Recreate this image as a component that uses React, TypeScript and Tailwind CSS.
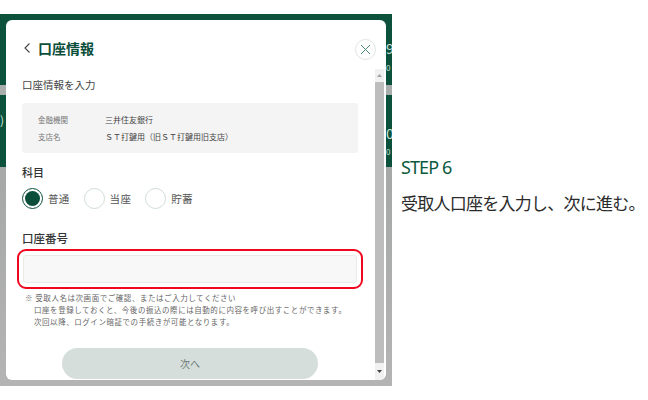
import React from "react";

const jp = "font-['Noto_Sans_CJK_JP','Noto_Sans',sans-serif]";

function Radio({ label, on }: { label: string; on?: boolean }) {
  return (
    <div className="flex items-center gap-[5px]">
      <div className={`w-[21px] h-[21px] rounded-full border flex items-center justify-center ${on ? "border-[#0b4f3a] border-[1.5px]" : "border-[#cfdcd7]"}`}>
        {on && <div className="w-[15px] h-[15px] rounded-full bg-[#0b4f3a]" />}
      </div>
      <span className="text-[10.5px] tracking-[0.3px] text-[#555]">{label}</span>
    </div>
  );
}

export default function App() {
  return (
    <div className={`${jp} w-[648px] h-[400px] bg-white flex overflow-hidden`}>
      <div className="w-[392px] shrink-0 pt-[14px]">
        <div className="relative w-[392px] h-[372px] flex flex-col bg-[#b0b0b0]">
          <div className="h-[71px] bg-[#0b513b]" />
          <div className="h-[10px] bg-[#a9aeac]" />
          <div className="h-[72px] bg-[#0b513b]" />
          <div className="flex-1 bg-gradient-to-b from-[#a5a8a6] to-[#b4b4b4]" />

          <span className="absolute right-0 top-[26px] w-[6px] overflow-hidden text-[14px] leading-[16px] text-[#cfe0d9]">9</span>
          <span className="absolute right-0 top-[49px] w-[6px] overflow-hidden text-[8px] leading-[10px] text-[#cfe0d9]">0</span>
          <span className="absolute right-0 top-[111px] w-[6px] overflow-hidden text-[14px] leading-[16px] text-[#cfe0d9]">0</span>
          <span className="absolute right-0 top-[133px] w-[6px] overflow-hidden text-[8px] leading-[10px] text-[#cfe0d9]">0</span>
          <span className="absolute left-0 top-[99px] w-[4px] overflow-hidden text-[12px] leading-[14px] text-[#cfe0d9]">)</span>

          <div className="absolute left-[6px] top-[6px] w-[380px] h-[360px] bg-white rounded-[6px] overflow-hidden flex">
            <div className="w-[369px] shrink-0 flex flex-col pl-[16px] pr-[17px]">
              <div className="h-[49px] flex items-center justify-between shrink-0">
                <div className="flex items-center gap-[5px] pt-[7px]">
                  <svg width="11" height="12" viewBox="0 0 11 12" fill="none" stroke="#444" strokeWidth="1.1"><path d="M7.5 1.5 3 6l4.5 4.5" /></svg>
                  <span className="text-[14px] leading-[20px] font-bold text-[#0b4f3a]">口座情報</span>
                </div>
                <div className="w-[21px] h-[21px] mr-[-18px] mt-[9px] rounded-full border border-[#dfe6e3] flex items-center justify-center">
                  <svg width="11" height="11" viewBox="0 0 11 11" fill="none" stroke="#4d8a76" strokeWidth="1"><path d="M1 1l9 9M10 1l-9 9" /></svg>
                </div>
              </div>

              <div className="text-[10.5px] leading-[16px] text-[#444] mt-[8px] shrink-0">口座情報を入力</div>

              <div className="mt-[10px] h-[50px] shrink-0 bg-[#f4f4f4] rounded-[3px] px-[16px] flex flex-col justify-center gap-[5px] text-[7.5px] leading-[12px]">
                <div className="flex">
                  <span className="w-[67px] text-[#777]">金融機関</span>
                  <span className="text-[#444] text-[8px]">三井住友銀行</span>
                </div>
                <div className="flex">
                  <span className="w-[67px] text-[#777]">支店名</span>
                  <span className="text-[#444] text-[8px]">ＳＴ打鍵用（旧ＳＴ打鍵用旧支店）</span>
                </div>
              </div>

              <div className="mt-[11px] text-[11px] leading-[16px] font-medium text-[#333] shrink-0">科目</div>
              <div className="mt-[8px] flex gap-[14px] shrink-0">
                <Radio label="普通" on />
                <Radio label="当座" />
                <Radio label="貯蓄" />
              </div>

              <div className="mt-[21px] text-[11.5px] leading-[16px] font-medium text-[#333] shrink-0">口座番号</div>
              <div className="mt-[3px] -mx-[5px] h-[40px] border-2 border-[#f0061f] rounded-[9px] p-[4px] shrink-0">
                <div className="h-full bg-[#f8f8f8] border border-[#e8ebe9] rounded-[3px]" />
              </div>

              <div className="mt-[3px] pl-[3px] text-[7.5px] leading-[12px] tracking-[0.55px] text-[#666] whitespace-nowrap shrink-0">
                <div>※ 受取人名は次画面でご確認、またはご入力してください</div>
                <div className="pl-[9px]">口座を登録しておくと、今後の振込の際には自動的に内容を呼び出すことができます。</div>
                <div className="pl-[9px]">次回以降、ログイン暗証での手続きが可能となります。</div>
              </div>

              <div className="mt-[20px] ml-[40px] w-[256px] h-[31px] shrink-0 rounded-full bg-[#d5dedb] flex items-center justify-center text-[10px] text-[#6f7a76]">次へ</div>
            </div>

            <div className="w-[9px] mt-[49px] flex flex-col bg-[#f1f1f1]">
              <div className="h-[13px] flex items-center justify-center">
                <svg width="5" height="3" viewBox="0 0 5 3"><path d="M2.5 0 5 3H0z" fill="#a3a3a3" /></svg>
              </div>
              <div className="flex-1 bg-[#bdbdbd]" />
              <div className="h-[17px] flex items-center justify-center">
                <svg width="5" height="3" viewBox="0 0 5 3"><path d="M0 0h5L2.5 3z" fill="#444" /></svg>
              </div>
            </div>
          </div>
        </div>
      </div>

      <div className="pl-[9px] pt-[155px]">
        <div className="text-[18px] leading-[24px] tracking-[-0.9px] text-[#0b5a40] font-['Noto_Sans',sans-serif]">STEP 6</div>
        <div className="mt-[12px] text-[17px] leading-[24px] tracking-[-0.75px] text-[#2b2b2b] whitespace-nowrap">受取人口座を入力し、次に進む。</div>
      </div>
    </div>
  );
}
